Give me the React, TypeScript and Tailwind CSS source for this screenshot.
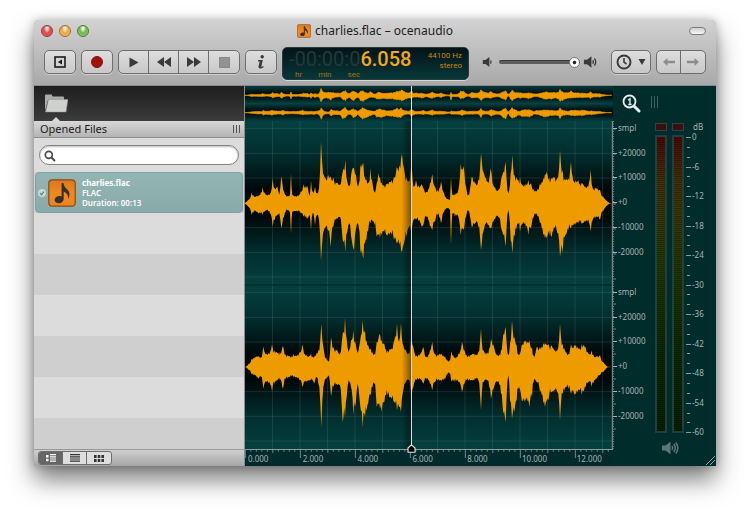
import { useState, type ReactNode } from 'react';

/* ── Envelope data: [x, peak above centre, peak below centre] ── */
type Peak = [number, number, number];

const LEFT_CHANNEL: Peak[] = [
  [0, 2, 2], [10, 10, 10], [20, 32, 35], [30, 20, 22], [40, 22, 30], [53, 48, 35], [65, 25, 20],
  [75, 28, 30], [83, 75, 70], [89, 45, 50], [97, 50, 35], [103, 25, 30], [109, 82, 75], [117, 35, 40],
  [125, 20, 18], [135, 25, 28], [138, 90, 92], [142, 25, 25], [155, 20, 22], [167, 35, 30],
  [175, 58, 40], [188, 50, 45], [194, 22, 35], [198, 68, 80], [203, 35, 30], [210, 50, 65],
  [216, 30, 35], [222, 45, 50], [228, 185, 172], [234, 90, 90], [241, 75, 72], [250, 85, 82],
  [257, 80, 132], [265, 78, 70], [275, 60, 45], [285, 55, 40], [293, 95, 110], [301, 130, 145],
  [307, 65, 85], [313, 52, 60], [321, 100, 115], [327, 105, 140], [333, 85, 75], [339, 50, 60],
  [346, 110, 140], [355, 120, 165], [362, 70, 110], [369, 60, 85], [376, 105, 60], [381, 70, 50],
  [388, 35, 65], [395, 60, 100], [400, 90, 95], [410, 62, 95], [425, 58, 95], [435, 65, 90],
  [447, 80, 110], [455, 108, 120], [463, 115, 125], [471, 148, 145], [477, 105, 120], [485, 78, 100],
  [492, 65, 70], [500, 118, 80], [505, 50, 50], [513, 70, 50], [525, 50, 55], [530, 58, 70],
  [535, 45, 65], [545, 35, 40], [555, 60, 70], [562, 88, 80], [570, 50, 55],
  [578, 40, 35], [588, 65, 60], [597, 30, 25], [610, 12, 14], [615, 10, 20], [618, 78, 125],
  [622, 25, 30], [630, 30, 40], [640, 40, 40], [647, 118, 95], [656, 112, 80], [663, 50, 40],
  [670, 25, 22], [680, 80, 70], [690, 60, 60], [700, 70, 70], [708, 150, 140], [715, 95, 85],
  [723, 75, 60], [731, 60, 65], [737, 105, 75], [745, 55, 55], [760, 40, 40], [770, 80, 80],
  [782, 125, 130], [790, 30, 20], [797, 90, 110], [802, 145, 150], [809, 85, 100], [818, 70, 60],
  [825, 78, 85], [835, 50, 55], [850, 70, 95], [858, 60, 75], [870, 35, 30], [885, 60, 60],
  [895, 75, 95], [905, 95, 105], [920, 75, 100], [927, 75, 70], [937, 75, 90], [945, 160, 160],
  [953, 100, 150], [961, 70, 95], [970, 75, 80], [978, 125, 75], [987, 65, 65], [1000, 70, 60],
  [1012, 60, 60], [1025, 45, 50], [1037, 100, 85], [1043, 45, 50], [1055, 45, 40], [1065, 40, 50],
  [1075, 20, 22], [1085, 8, 8], [1096, 0, 0],
];

const RIGHT_CHANNEL: Peak[] = [
  [5, 2, 2], [10, 8, 8], [20, 25, 22], [30, 30, 25], [40, 32, 35], [48, 30, 30], [55, 62, 65],
  [63, 38, 42], [73, 38, 45], [81, 68, 72], [88, 50, 50], [97, 42, 38], [105, 45, 40], [114, 62, 65],
  [121, 38, 35], [135, 32, 30], [145, 40, 30], [155, 32, 30], [165, 45, 40], [172, 68, 60],
  [180, 40, 45], [190, 30, 40], [198, 40, 40], [207, 30, 50], [215, 42, 30], [223, 50, 60],
  [229, 130, 180], [235, 60, 60], [243, 28, 38], [252, 15, 25], [258, 88, 88], [265, 60, 60],
  [275, 50, 50], [285, 38, 55], [293, 100, 165], [300, 148, 150], [305, 85, 90], [311, 45, 40],
  [318, 80, 60], [325, 110, 145], [332, 70, 110], [338, 42, 50], [345, 75, 110], [353, 140, 180],
  [360, 110, 150], [367, 65, 115], [377, 55, 85], [388, 40, 50], [395, 75, 120], [403, 98, 110],
  [410, 80, 135], [418, 70, 105], [428, 50, 85], [440, 55, 95], [448, 80, 105], [456, 130, 130],
  [462, 75, 120], [468, 132, 135], [473, 70, 80], [483, 50, 45], [492, 40, 38], [499, 100, 100],
  [505, 60, 60], [515, 35, 40], [525, 38, 35], [535, 60, 50], [545, 30, 35], [555, 50, 50],
  [562, 75, 70], [570, 38, 45], [585, 40, 40], [600, 32, 38], [613, 18, 18], [619, 48, 45],
  [630, 30, 45], [640, 40, 45], [651, 75, 75], [660, 45, 45], [670, 35, 42], [685, 38, 38],
  [700, 45, 40], [708, 115, 130], [713, 50, 45], [725, 40, 38], [738, 85, 95], [747, 60, 60],
  [758, 35, 45], [768, 50, 80], [775, 100, 140], [782, 120, 165], [790, 35, 25], [795, 70, 100],
  [801, 140, 155], [808, 90, 135], [815, 65, 100], [822, 35, 60], [830, 65, 100], [840, 75, 95],
  [853, 80, 120], [861, 60, 90], [868, 30, 35], [875, 60, 45], [885, 60, 75], [900, 72, 120],
  [910, 68, 100], [920, 65, 75], [930, 50, 70], [937, 50, 75], [945, 130, 160], [953, 70, 80],
  [962, 45, 60], [970, 40, 65], [978, 68, 80], [990, 62, 78], [1003, 55, 70], [1010, 70, 85],
  [1022, 60, 60], [1030, 40, 45], [1040, 50, 60], [1050, 30, 40], [1065, 35, 25], [1075, 15, 15],
  [1090, 0, 0],
];

/* Fine ripple between the peaks, so the envelope is not made of straight lines */
const ripple = (x: number, seed: number) => 0.94 + 0.16 * Math.sin(x * 1.7 + seed) * Math.cos(x * 0.61 + seed);

/* Falls off quickly from the louder end, which keeps the spikes narrow */
function between(a: number, b: number, t: number) {
  const towardsHigh = b > a ? t : 1 - t;
  return Math.min(a, b) + Math.abs(b - a) * Math.pow(towardsHigh, 1.5);
}

function wavePath(peaks: Peak[], centre: number, scale: number) {
  const top: string[] = [];
  const bottom: string[] = [];
  for (let i = 0; i < peaks.length - 1; i++) {
    const [x0, u0, d0] = peaks[i];
    const [x1, u1, d1] = peaks[i + 1];
    const steps = Math.max(1, Math.round((x1 - x0) / 2.5));
    for (let s = 0; s < steps; s++) {
      const t = s / steps;
      const x = x0 + (x1 - x0) * t;
      const ru = s === 0 ? 1 : ripple(x, 1);
      const rd = s === 0 ? 1 : ripple(x, 4);
      top.push(`${x.toFixed(1)} ${(centre - between(u0, u1, t) * ru * scale).toFixed(1)}`);
      bottom.unshift(`${x.toFixed(1)} ${(centre + between(d0, d1, t) * rd * scale).toFixed(1)}`);
    }
  }
  return `M0 ${centre} L${top.join(' L')} L1100 ${centre} L${bottom.join(' L')} Z`;
}

const SECONDS = 13.4;
const POSITION = 6.058;
const TIME_MARKS = ['0.000', '2.000', '4.000', '6.000', '8.000', '10.000', '12.000'];
const AMPLITUDES = ['smpl', '+20000', '+10000', '+0', '-10000', '-20000'];
const DECIBELS = [0, -6, -12, -18, -24, -30, -36, -42, -48, -54, -60];

const range = (n: number) => Array.from({ length: n }, (_, i) => i);

/* ── Toolbar pieces ─────────────────────────────────────────── */
function ToolGroup({ children }: { children: ReactNode }) {
  return (
    <div className="flex h-6 shrink-0 divide-x divide-[#6e6e6e] overflow-hidden rounded-[5px] border border-[#6e6e6e] bg-linear-to-b from-[#dedede] to-[#c8c8c8] shadow-[0_1px_0_#ffffff66]">
      {children}
    </div>
  );
}

function ToolButton({ label, wide, children }: { label: string; wide?: boolean; children: ReactNode }) {
  return (
    <button
      type="button"
      aria-label={label}
      className={`flex items-center justify-center ${wide ? 'w-[38px] gap-1.5' : 'w-[30px]'}`}
    >
      {children}
    </button>
  );
}

function NoteIcon({ className }: { className: string }) {
  return (
    <svg viewBox="0 0 28 28" className={className} aria-hidden="true">
      <defs>
        <linearGradient id="note" x1="0" y1="0" x2="0" y2="1">
          <stop offset="0" stopColor="#d9781f" />
          <stop offset="0.5" stopColor="#f08a1c" />
          <stop offset="1" stopColor="#ee8420" />
        </linearGradient>
      </defs>
      <rect x="0.8" y="0.8" width="26.4" height="26.4" rx="3.5" fill="url(#note)" stroke="#8a4a18" strokeWidth="1.2" />
      <path
        d="M13.600 4h1.800c.5 3.500 2.300 4.800 4.200 6.800 2.400 2.600 2.600 5.600.6 9.200.2-3.800-1.400-6.400-4.500-7.600v7c0 2.900-2.300 4.800-5 4.800-2.500 0-4.100-1.300-4.100-3.200 0-2.300 2.200-4 4.800-4 .8 0 1.500.1 2.200.4z"
        fill="#33302e"
      />
    </svg>
  );
}

function SpeakerIcon({ waves, className }: { waves: number; className: string }) {
  return (
    <svg viewBox="0 0 18 14" className={className} aria-hidden="true">
      <path d="M1 4.500h3.500L9.500 0.500v13L4.500 9.500H1z" fill="currentColor" />
      <g fill="none" stroke="currentColor" strokeWidth="1.5">
        <path d="M11 5q1.400 2 0 4" />
        {waves > 1 && <path d="M12.800 3q3 4 0 8" />}
        {waves > 2 && <path d="M14.800 1.500q4 5.500 0 11" />}
      </g>
    </svg>
  );
}

function Header({ volume, onVolume }: { volume: number; onVolume: (v: number) => void }) {
  return (
    <header className="border-b border-[#8a8a8a] bg-linear-to-b from-[#d2d2d2] to-[#a9a9a9] px-2.5">
      <div className="grid h-[22px] grid-cols-[1fr_auto_1fr] items-center">
        <div className="-ml-1 flex gap-1.5 pl-px">
          <button type="button" aria-label="Close" className="size-3 rounded-full border border-[#8e3a38] bg-[radial-gradient(ellipse_at_50%_25%,#ffe3e0_8%,#e0474c_45%,#e8696a_100%)]" />
          <button type="button" aria-label="Minimize" className="size-3 rounded-full border border-[#9a6a2e] bg-[radial-gradient(ellipse_at_50%_25%,#fff4dc_8%,#f0a040_45%,#fbd37c_100%)]" />
          <button type="button" aria-label="Zoom" className="size-3 rounded-full border border-[#4b7a38] bg-[radial-gradient(ellipse_at_50%_25%,#edfbe4_8%,#6cb54c_45%,#a2dc84_100%)]" />
        </div>
        <h1 className="flex items-center gap-1 text-[12px] leading-4 text-[#1c1c1c]">
          <NoteIcon className="size-3.5" />
          charlies.flac – ocenaudio
        </h1>
        <button type="button" aria-label="Toggle toolbar" className="h-2 w-[17px] justify-self-end rounded-full border border-[#7c7c7c] bg-linear-to-b from-[#d0d0d0] to-[#f6f6f6]" />
      </div>

      <div className="flex items-start justify-between pt-2 pb-[5px] text-[#3a3a3a]">
        <div className="flex gap-[5px]">
          <ToolGroup>
            <ToolButton label="Toggle side panel">
              <svg viewBox="0 0 12 12" className="size-3">
                <rect x="1" y="1" width="10" height="10" fill="none" stroke="#1a1a1a" strokeWidth="1.6" />
                <path d="M8 3.500v5L3.800 6z" fill="#1a1a1a" />
              </svg>
            </ToolButton>
          </ToolGroup>
          <ToolGroup>
            <ToolButton label="Record">
              <span className="size-3 rounded-full border border-[#7e1512] bg-[#a80f0c]" />
            </ToolButton>
          </ToolGroup>
          <ToolGroup>
            <ToolButton label="Play">
              <svg viewBox="0 0 10 11" className="h-[11px] w-2.5"><path d="M0.500 0.500v10L9.500 5.500z" fill="currentColor" /></svg>
            </ToolButton>
            <ToolButton label="Rewind">
              <svg viewBox="0 0 14 10" className="h-2.5 w-3.5"><path d="M7 0v10L0 5zM14 0v10L7 5z" fill="currentColor" /></svg>
            </ToolButton>
            <ToolButton label="Fast forward">
              <svg viewBox="0 0 14 10" className="h-2.5 w-3.5"><path d="M0 0v10l7-5zM7 0v10l7-5z" fill="currentColor" /></svg>
            </ToolButton>
            <ToolButton label="Stop">
              <span className="size-[11px] border border-[#8a8a8a] bg-[#929292]" />
            </ToolButton>
          </ToolGroup>
          <ToolGroup>
            <ToolButton label="Information">
              <svg viewBox="0 0 8 14" className="h-3.5 w-2">
                <circle cx="5.200" cy="1.800" r="1.700" fill="currentColor" />
                <path d="M1.200 5h4.600L4.300 11.600q1 .2 2.200-.8v1.500Q4.800 13.800 2.800 13.600 1.200 13.300 1.500 11.600L2.700 6.500H1z" fill="currentColor" />
              </svg>
            </ToolButton>
          </ToolGroup>
          <Display />
        </div>

        <div className="flex h-6 items-center gap-[3px]">
          <SpeakerIcon waves={1} className="h-3 w-3.5" />
          <input
            type="range"
            aria-label="Volume"
            min={0}
            max={100}
            value={volume}
            onChange={(e) => onVolume(Number(e.target.value))}
            className="h-1 w-[81px] appearance-none rounded-full border-t border-[#3a3a3a] bg-[#5c5c5c] [&::-webkit-slider-thumb]:size-[11px] [&::-webkit-slider-thumb]:appearance-none [&::-webkit-slider-thumb]:rounded-full [&::-webkit-slider-thumb]:border [&::-webkit-slider-thumb]:border-[#777777] [&::-webkit-slider-thumb]:bg-[radial-gradient(circle,#222222_20%,#ffffff_35%)]"
          />
          <SpeakerIcon waves={2} className="h-3.5 w-4" />
        </div>

        <div className="flex gap-[5px]">
          <ToolGroup>
            <ToolButton label="History" wide>
              <svg viewBox="0 0 16 16" className="size-4" fill="none" stroke="currentColor">
                <circle cx="8" cy="8" r="6.500" strokeWidth="2" />
                <path d="M8 4v4.200l2.500 1.800" strokeWidth="1.600" />
              </svg>
              <svg viewBox="0 0 8 6" className="h-1.5 w-2"><path d="M0.500 0h7L4 6z" fill="currentColor" /></svg>
            </ToolButton>
          </ToolGroup>
          <div className="flex h-6 divide-x divide-[#6e6e6e] overflow-hidden rounded-[5px] border border-[#6e6e6e] bg-linear-to-b from-[#dedede] to-[#c8c8c8] text-[#8c8c8c]">
            <button type="button" aria-label="Undo" className="flex w-6 items-center justify-center">
              <svg viewBox="0 0 12 8" className="h-2 w-3"><path d="M0 4l4.500-4v2.700H12v2.600H4.500V8z" fill="currentColor" /></svg>
            </button>
            <button type="button" aria-label="Redo" className="flex w-6 items-center justify-center">
              <svg viewBox="0 0 12 8" className="h-2 w-3"><path d="M12 4L7.500 0v2.700H0v2.600h7.500V8z" fill="currentColor" /></svg>
            </button>
          </div>
        </div>
      </div>
    </header>
  );
}

/* ── LCD with the play position ─────────────────────────────── */
function Display() {
  return (
    <div className="-mt-[3px] flex h-[33px] w-[187px] justify-between rounded-[5px] border border-[#2a3a3a] bg-linear-to-b from-[#031416] to-[#07383a] px-1.5 shadow-[0_1px_0_#ffffff88]">
      <div>
        <p className="font-[Roboto,sans-serif] text-[20px] leading-[22px] font-medium text-[#f3a81c]">
          <span className="font-normal text-[#24393a]">-00:00:0</span>6.058
        </p>
        <p className="flex gap-4 pl-1.5 font-[Roboto,sans-serif] text-[8px] leading-[9px] text-[#a8700f]">
          <span>hr</span>
          <span>min</span>
          <span>sec</span>
        </p>
      </div>
      <p className="pt-[3px] text-right font-[Roboto,sans-serif] text-[8px] leading-[10px] text-[#c58618]">
        44100 Hz
        <br />
        stereo
      </p>
    </div>
  );
}

/* ── Opened files ───────────────────────────────────────────── */
function Sidebar() {
  return (
    <aside className="flex w-[211px] shrink-0 flex-col border-r border-[#8e8e8e] bg-[#dcdcdc]">
      <div className="relative h-[35px] bg-linear-to-b from-[#1e1e1e] to-[#3c3c3c] pt-2 pl-2.5">
        <svg viewBox="0 0 24 19" className="h-[19px] w-6" role="img" aria-label="Files">
          <path d="M1 1.500q0-1 1-1h5.500l1.200 2H19q1 0 1 1V6H4L1 17z" fill="#a9aba9" />
          <path d="M4.500 5.500H24L22 18H1.500z" fill="#cfd1cf" stroke="#8e908e" strokeWidth="0.500" />
        </svg>
        <span className="absolute bottom-0 left-[18px] border-x-4 border-b-4 border-x-transparent border-b-[#d8d8d8]" />
      </div>
      <div className="flex h-[17px] items-center justify-between border-b border-[#8e8e8e] bg-linear-to-b from-[#d8d8d8] to-[#b4b4b4] pr-1 pl-1.5">
        <h2 className="text-[11px] leading-4 text-[#1c1c1c]">Opened Files</h2>
        <span className="h-2 w-[7px] border-x border-[#555555] bg-[linear-gradient(90deg,transparent_2px,#555555_2px,#555555_3px,transparent_3px)]" />
      </div>
      <div className="relative px-[5px] pt-[7px] pb-[7px]">
        <svg viewBox="0 0 12 12" className="absolute top-3 left-2.5 size-3" fill="none" stroke="#4c4c4c" aria-hidden="true">
          <circle cx="4.800" cy="4.800" r="3.500" strokeWidth="1.700" />
          <path d="M7.500 7.500l3.500 3.500" strokeWidth="2" />
        </svg>
        <input
          type="search"
          aria-label="Search opened files"
          className="block h-5 w-full rounded-full border border-[#848484] bg-white pl-5 text-[11px] shadow-[inset_0_1px_2px_#00000044] outline-none"
        />
      </div>
      <ul className="flex min-h-0 flex-1 basis-0 flex-col overflow-hidden bg-[repeating-linear-gradient(#cfcfcf_0_41px,#dcdcdc_41px_82px)]">
        <li className="mx-px flex h-[41px] shrink-0 items-center rounded-[4px] border border-[#7da4a2] bg-linear-to-b from-[#93b6b4] to-[#88aaa8] pl-0.5">
          <svg viewBox="0 0 8 8" className="size-2" aria-hidden="true">
            <circle cx="4" cy="4" r="4" fill="#c9dada" />
            <path d="M2 4l1.600 1.700L6 2.500" fill="none" stroke="#5f8583" strokeWidth="1.200" />
          </svg>
          <NoteIcon className="ml-0.5 size-7" />
          <div className="ml-1.5 text-[8px] leading-[10px] font-semibold text-white">
            <p className="font-bold">charlies.flac</p>
            <p>FLAC</p>
            <p>Duration: 00:13</p>
          </div>
        </li>
      </ul>
      <div className="flex h-[17px] items-center border-t border-[#9a9a9a] bg-linear-to-b from-[#d0d0d0] to-[#a6a6a6] pl-1">
        <div className="flex h-3.5 divide-x divide-[#6e6e6e] overflow-hidden rounded-[3px] border border-[#6e6e6e] bg-[#dedede] text-[#333333]">
          <button type="button" aria-label="Detailed list" className="flex w-6 items-center justify-center bg-[#666666] text-white">
            <svg viewBox="0 0 10 8" className="h-2 w-2.5" fill="currentColor">
              <path d="M0 1h2.500v2.500H0zM0 4.800h2.500v2.500H0zM4 0h6v1.200H4zM4 2.200h6v1.200H4zM4 4.400h6v1.200H4zM4 6.600h6v1.200H4z" />
            </svg>
          </button>
          <button type="button" aria-label="List" className="flex w-6 items-center justify-center">
            <svg viewBox="0 0 10 8" className="h-2 w-2.5" fill="currentColor">
              <path d="M0 0h10v1.200H0zM0 2.200h10v1.200H0zM0 4.400h10v1.200H0zM0 6.600h10v1.200H0z" />
            </svg>
          </button>
          <button type="button" aria-label="Grid" className="flex w-6 items-center justify-center">
            <svg viewBox="0 0 10 7" className="h-[7px] w-2.5" fill="currentColor">
              <path d="M0 0h2.600v3H0zM3.700 0h2.600v3H3.700zM7.400 0H10v3H7.400zM0 4h2.600v3H0zM3.700 4h2.600v3H3.700zM7.400 4H10v3H7.400z" />
            </svg>
          </button>
        </div>
      </div>
    </aside>
  );
}

/* ── Overview, waveform and time ruler ──────────────────────── */
function Waveform() {
  return (
    <main className="relative flex min-w-0 flex-1 flex-col">
      <svg viewBox="0 0 1104 105" preserveAspectRatio="none" className="h-[35px] w-full bg-[linear-gradient(#063c3c_0%,#001010_20%,#001010_32%,#064040_50%,#001010_68%,#001010_80%,#063c3c_100%)]" role="img" aria-label="Overview">
        <g fill="#ee9b00" stroke="#ee9b00" strokeWidth="2">
          <path d={wavePath(LEFT_CHANNEL, 28, 0.11)} />
          <path d={wavePath(RIGHT_CHANNEL, 80, 0.11)} />
        </g>
      </svg>
      <svg viewBox="0 0 1104 984" preserveAspectRatio="none" className="h-[328px] w-full bg-[#003c3c]" role="img" aria-label="Waveform">
        <defs>
          <linearGradient id="channel" x1="0" y1="0" x2="0" y2="1">
            <stop offset="0" stopColor="#04403f" />
            <stop offset="0.200" stopColor="#022e2f" />
            <stop offset="0.420" stopColor="#000809" />
            <stop offset="0.580" stopColor="#000809" />
            <stop offset="0.800" stopColor="#022e2f" />
            <stop offset="1" stopColor="#04403f" />
          </linearGradient>
          <linearGradient id="trail">
            <stop offset="0" stopColor="#000000" stopOpacity="0" />
            <stop offset="1" stopColor="#000000" stopOpacity="0.450" />
          </linearGradient>
        </defs>
        <rect width="1104" height="492" fill="url(#channel)" />
        <rect y="492" width="1104" height="492" fill="url(#channel)" />
        <g stroke="#8a9a98" strokeOpacity="0.220" strokeWidth="2.500">
          {range(13).map((i) => (
            <path key={i} d={`M${(i + 1) * 82.5} 0V984`} />
          ))}
          {[22, 97, 171, 320, 394, 468].map((y) => (
            <path key={y} d={`M0 ${y}H1104M0 ${y + 492}H1104`} />
          ))}
        </g>
        <path d="M0 492H1104" stroke="#001f20" strokeWidth="3" />
        <g fill="#ee9b00">
          <path d={wavePath(LEFT_CHANNEL, 247, 1)} />
          <path d={wavePath(RIGHT_CHANNEL, 738, 1)} />
        </g>
        <rect x="470" width="28" height="984" fill="url(#trail)" />
        <path d="M1102 0V984" stroke="#8c9a98" strokeWidth="3" />
      </svg>
      <div className="relative flex h-[17px] border-t border-[#8c9a98] bg-[#002a2b] text-[8px] leading-[17px] text-[#a9b3b1]">
        <svg viewBox="0 0 1104 24" preserveAspectRatio="none" className="absolute inset-x-0 top-0 h-2 w-full" aria-hidden="true">
          <g stroke="#8c9a98" strokeWidth="2.500">
            {range(67).map((i) => (
              <path key={i} d={`M${i * 16.5 + 1} 0V${i % 10 === 0 ? 24 : i % 5 === 0 ? 9 : 5}`} />
            ))}
          </g>
        </svg>
        {TIME_MARKS.map((mark, i) => (
          <span
            key={mark}
            className="basis-0 pl-[3px]"
            style={{ flexGrow: Math.min(2, SECONDS - i * 2) }}
          >
            {mark}
          </span>
        ))}
      </div>
      <div
        className="absolute top-0 bottom-[17px] w-px bg-[#d8dcda]"
        style={{ left: `${(POSITION / SECONDS) * 100}%` }}
      >
        <svg viewBox="0 0 9 9" className="absolute -bottom-1 -left-1 size-[9px]" aria-hidden="true">
          <path d="M4.500 0.800L8 4v4.300H1V4z" fill="#000000" stroke="#e6e6e6" strokeWidth="1.100" />
        </svg>
      </div>
    </main>
  );
}

/* ── Amplitude scale, level meters ──────────────────────────── */
function Meter() {
  return (
    <div className="flex w-3 flex-col gap-1">
      <span className="h-2 border border-[#2c4645] bg-[#3c0f0e]" />
      <span className="h-[298px] border-2 border-[#213f3e] bg-[repeating-linear-gradient(transparent_0_1px,#00000055_1px_2px),linear-gradient(#4d0a08_0%,#4a3007_14%,#3b3b04_26%,#223a02_45%,#0c2a02_75%,#082202_100%)]" />
    </div>
  );
}

function Levels() {
  return (
    <section className="flex w-[103px] shrink-0 flex-col bg-[#012c2c] text-[#a9b3b1]">
      <div className="flex h-[35px] items-start gap-2.5 pt-2 pl-[9px]">
        <button type="button" aria-label="Zoom 1:1" className="size-[19px]">
          <svg viewBox="0 0 19 19" className="size-[19px]">
            <circle cx="7.500" cy="7.500" r="6" fill="none" stroke="#e8ecec" strokeWidth="1.800" />
            <path d="M12 12l5 5" stroke="#e8ecec" strokeWidth="3" strokeLinecap="round" />
            <path d="M6 6.200L8 4.800V10.500M6.300 10.500h3.300" fill="none" stroke="#e8ecec" strokeWidth="1.400" />
          </svg>
        </button>
        <span className="mt-0.5 h-3 w-[7px] border-x border-[#3f6160] bg-[linear-gradient(90deg,transparent_2px,#3f6160_2px,#3f6160_3px,transparent_3px)]" />
      </div>
      <div className="flex flex-1">
        <svg viewBox="0 0 42 328" className="h-[328px] w-[42px] shrink-0 text-[8px]" role="img" aria-label="Amplitude scale">
          <g stroke="#8c9a98">
            {range(132).map((i) => (
              <path key={i} d={`M0 ${i * 2.5 + 0.5}h${i % 10 === 3 ? 3 : 1}`} strokeWidth="0.800" />
            ))}
          </g>
          {[0, 164].map((top) =>
            AMPLITUDES.map((label, i) => {
              const y = top + 8 + Math.round(i * 24.7);
              return (
                <g key={`${top}${label}`}>
                  <path d={`M0 ${y - 0.5}h4`} stroke="#a9b3b1" />
                  <text x="5" y={y + 2} fill="currentColor">{label}</text>
                </g>
              );
            }),
          )}
        </svg>
        <div className="flex flex-col items-center pt-0.5">
          <div className="flex gap-[5px]">
            <Meter />
            <Meter />
          </div>
          <SpeakerIcon waves={3} className="mt-2 h-3.5 w-[18px] text-[#5d7776]" />
        </div>
        <svg viewBox="0 0 31 328" className="h-[328px] w-[31px] shrink-0 text-[8px]" role="img" aria-label="Decibel scale">
          <text x="9" y="9" fill="currentColor">dB</text>
          {range(61).filter((i) => i % 2 === 0).map((i) => (
            <path key={i} d={`M${i % 6 === 0 ? 2 : 3} ${Math.round(16 + i * 4.92) + 0.5}h${i % 6 === 0 ? 5 : 3}`} stroke="#8c9a98" />
          ))}
          {DECIBELS.map((db) => (
            <text key={db} x="8" y={19 - Math.round(db * 4.92)} fill="currentColor">{db}</text>
          ))}
        </svg>
      </div>
      <svg viewBox="0 0 10 10" className="mr-px mb-px size-2.5 self-end" aria-hidden="true">
        <path d="M1 10L10 1M5 10L10 5" stroke="#8fa3a2" strokeWidth="1" />
      </svg>
    </section>
  );
}

export default function App() {
  const [volume, setVolume] = useState(100);

  return (
    <div className="min-h-screen bg-white px-[34px] pt-5 pb-10 font-['Noto_Sans','Open_Sans',sans-serif]">
      <div className="overflow-hidden rounded-t-[5px] bg-[#b0b0b0] shadow-[0_14px_24px_#00000080,0_0_10px_#00000040]">
        <Header volume={volume} onVolume={setVolume} />
        <div className="flex">
          <Sidebar />
          <Waveform />
          <Levels />
        </div>
      </div>
    </div>
  );
}
